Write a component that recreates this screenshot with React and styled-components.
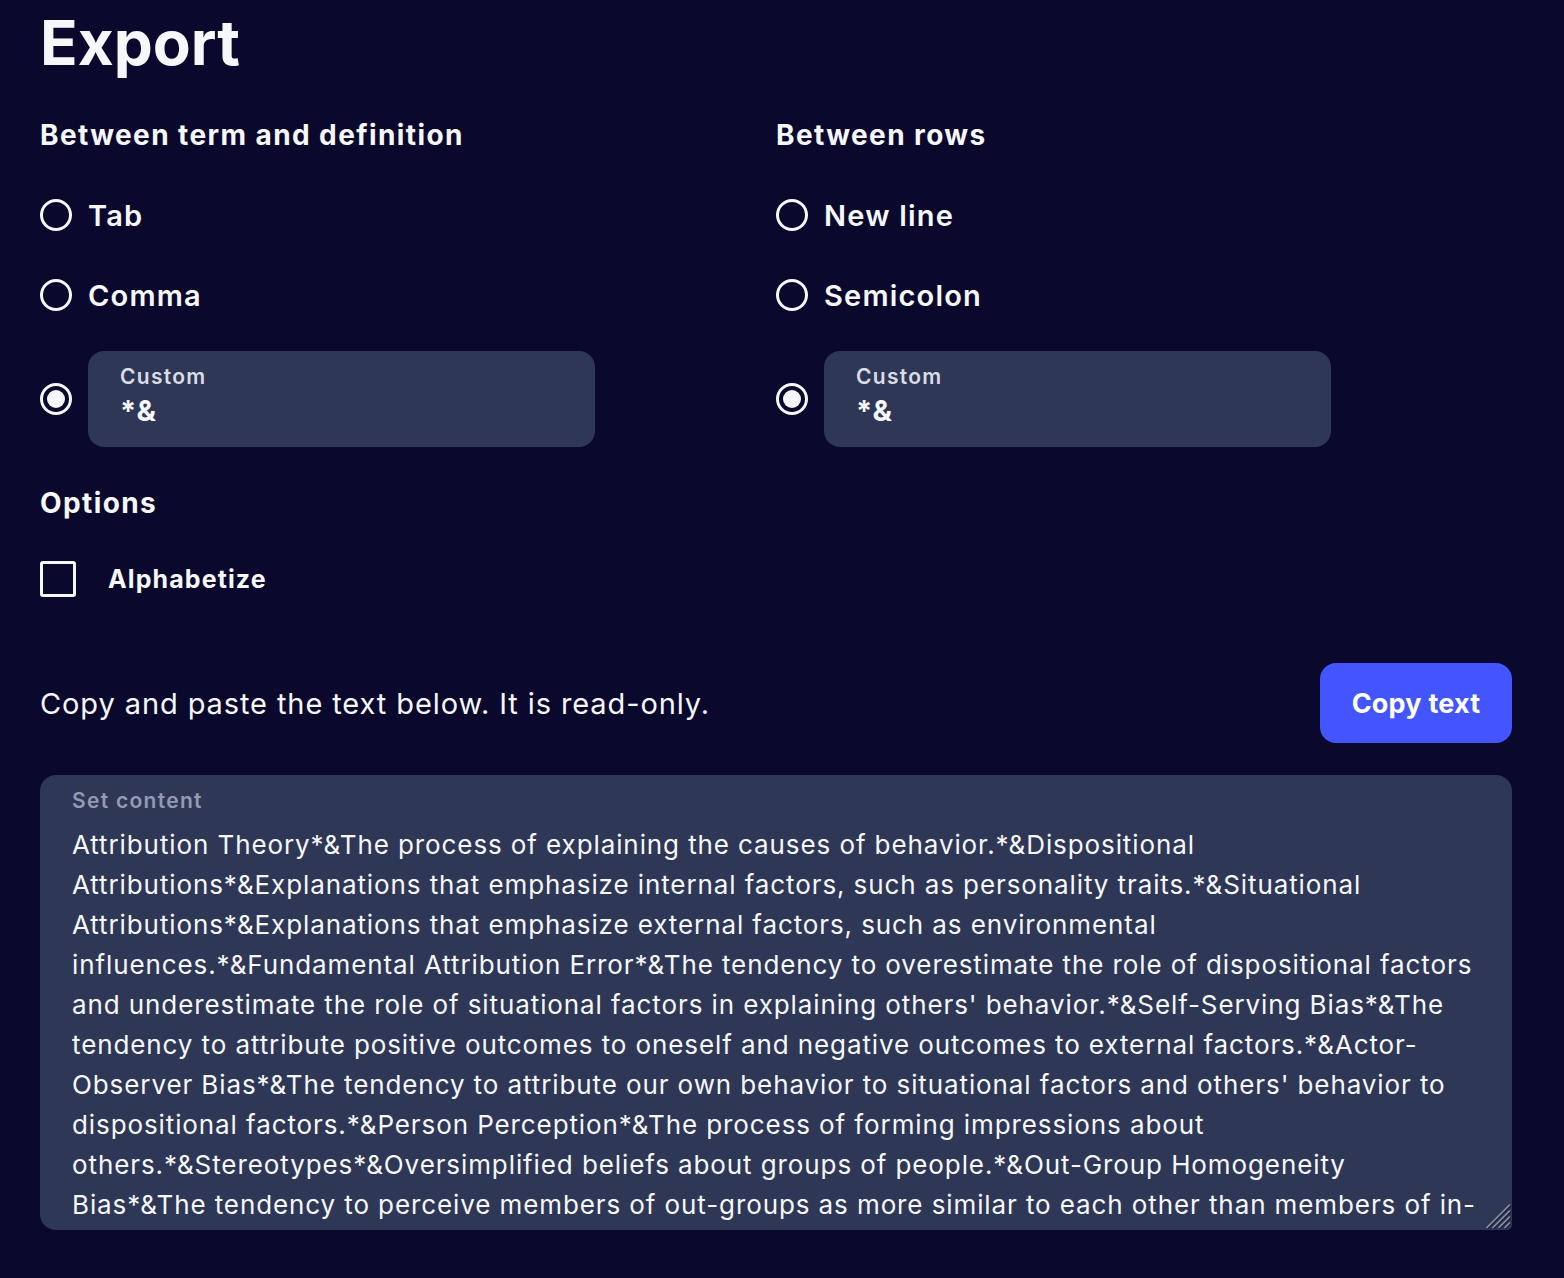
import React from "react";
import styled, { createGlobalStyle } from "styled-components";

const GlobalStyle = createGlobalStyle`
  body {
    margin: 0;
    background: #0a092d;
    color: #f6f7fb;
    font-family: Inter, "Open Sans", sans-serif;
  }
`;

const Page = styled.div`
  padding: 0 52px 40px 40px;
`;

const Title = styled.h1`
  font-size: 62px;
  font-weight: 700;
  line-height: 1;
  margin: 0;
  padding-top: 12px;
  letter-spacing: 0;
`;

const Columns = styled.div`
  display: grid;
  grid-template-columns: 1fr 1fr;
  margin-top: 43px;
`;

const Heading = styled.h2`
  font-size: 28px;
  font-weight: 700;
  line-height: 36px;
  margin: 0;
  letter-spacing: 1.4px;
`;

const OptionList = styled.div`
  display: flex;
  flex-direction: column;
  margin-top: 22px;
`;

const RadioRow = styled.label`
  display: flex;
  align-items: center;
  gap: 16px;
  min-height: ${props => (props.$tall ? "96px" : "80px")};
  margin-top: ${props => (props.$tall ? "16px" : "0")};
  font-size: 29px;
  font-weight: 600;
  letter-spacing: 1.2px;
`;

const Radio = styled.span`
  box-sizing: border-box;
  width: 32px;
  height: 32px;
  flex: none;
  border-radius: 50%;
  border: 3px solid #f6f7fb;
  display: flex;
  align-items: center;
  justify-content: center;

  &::after {
    content: "";
    width: 18px;
    height: 18px;
    border-radius: 50%;
    background: #f6f7fb;
    display: ${props => (props.$checked ? "block" : "none")};
  }
`;

const CustomBox = styled.div`
  box-sizing: border-box;
  width: 507px;
  height: 96px;
  background: #2e3856;
  border-radius: 16px;
  padding: 12px 32px;
  display: flex;
  flex-direction: column;
`;

const SmallLabel = styled.span`
  font-size: 21px;
  font-weight: 600;
  line-height: 28px;
  letter-spacing: 1.3px;
  color: ${props => (props.$muted ? "#939bb4" : "#d9dde8")};
`;

const CustomValue = styled.span`
  font-size: 29px;
  font-weight: 700;
  line-height: 40px;
`;

const OptionsSection = styled.section`
  margin-top: 38px;
`;

const CheckRow = styled.label`
  display: flex;
  align-items: center;
  gap: 32px;
  margin-top: 40px;
  font-size: 25px;
  font-weight: 700;
  letter-spacing: 1.1px;
`;

const Checkbox = styled.span`
  box-sizing: border-box;
  width: 36px;
  height: 36px;
  border: 3px solid #f6f7fb;
  border-radius: 3px;
`;

const CopyBar = styled.div`
  display: flex;
  align-items: center;
  justify-content: space-between;
  margin-top: 66px;
`;

const Hint = styled.p`
  margin: 0;
  font-size: 29px;
  font-weight: 400;
  letter-spacing: 0.9px;
`;

const CopyButton = styled.button`
  width: 192px;
  height: 80px;
  border: none;
  border-radius: 16px;
  background: #4255ff;
  color: #fff;
  font-family: inherit;
  font-size: 27px;
  font-weight: 700;
  letter-spacing: 0.2px;
  cursor: pointer;
`;

const OutputBox = styled.div`
  position: relative;
  margin-top: 32px;
  background: #2e3856;
  border-radius: 16px 16px 5px 16px;
  padding-top: 12px;
  display: flex;
  flex-direction: column;
  overflow: hidden;

  & > span {
    padding: 0 32px;
  }
`;

const Output = styled.textarea`
  box-sizing: border-box;
  width: 100%;
  height: 405px;
  margin-top: 10px;
  padding: 0 32px;
  border: none;
  outline: none;
  background: transparent;
  color: #f6f7fb;
  font-family: inherit;
  font-size: 26px;
  line-height: 40px;
  letter-spacing: 0.9px;
  white-space: pre;
  overflow: hidden;
  resize: none;
`;

const Grip = styled.svg`
  position: absolute;
  right: 1px;
  bottom: 1px;
  width: 26px;
  height: 26px;
  pointer-events: none;
`;

const lines = [
  "Attribution Theory*&The process of explaining the causes of behavior.*&Dispositional",
  "Attributions*&Explanations that emphasize internal factors, such as personality traits.*&Situational",
  "Attributions*&Explanations that emphasize external factors, such as environmental",
  "influences.*&Fundamental Attribution Error*&The tendency to overestimate the role of dispositional factors",
  "and underestimate the role of situational factors in explaining others' behavior.*&Self-Serving Bias*&The",
  "tendency to attribute positive outcomes to oneself and negative outcomes to external factors.*&Actor-",
  "Observer Bias*&The tendency to attribute our own behavior to situational factors and others' behavior to",
  "dispositional factors.*&Person Perception*&The process of forming impressions about",
  "others.*&Stereotypes*&Oversimplified beliefs about groups of people.*&Out-Group Homogeneity",
  "Bias*&The tendency to perceive members of out-groups as more similar to each other than members of in-",
  "groups.*&In-Group Bias*&The tendency to favor one's own group."
];

function SeparatorGroup({ title, first, second }) {
  return (
    <div>
      <Heading>{title}</Heading>
      <OptionList>
        <RadioRow>
          <Radio />
          {first}
        </RadioRow>
        <RadioRow>
          <Radio />
          {second}
        </RadioRow>
        <RadioRow $tall>
          <Radio $checked />
          <CustomBox>
            <SmallLabel>Custom</SmallLabel>
            <CustomValue>*&amp;</CustomValue>
          </CustomBox>
        </RadioRow>
      </OptionList>
    </div>
  );
}

export default function App() {
  return (
    <Page>
      <GlobalStyle />
      <Title>Export</Title>
      <Columns>
        <SeparatorGroup title="Between term and definition" first="Tab" second="Comma" />
        <SeparatorGroup title="Between rows" first="New line" second="Semicolon" />
      </Columns>
      <OptionsSection>
        <Heading>Options</Heading>
        <CheckRow>
          <Checkbox />
          Alphabetize
        </CheckRow>
      </OptionsSection>
      <CopyBar>
        <Hint>Copy and paste the text below. It is read-only.</Hint>
        <CopyButton>Copy text</CopyButton>
      </CopyBar>
      <OutputBox>
        <SmallLabel $muted>Set content</SmallLabel>
        <Output readOnly value={lines.join("\n")} />
        <Grip viewBox="0 0 26 26">
          <g strokeWidth="1.6" strokeLinecap="round">
            <path d="M3 25.5 L25.5 3" stroke="#1c2135" />
            <path d="M2 24.5 L24.5 2" stroke="#8d93a8" />
            <path d="M9 25.5 L25.5 9" stroke="#1c2135" />
            <path d="M8 24.5 L24.5 8" stroke="#8d93a8" />
            <path d="M15 25.5 L25.5 15" stroke="#1c2135" />
            <path d="M14 24.5 L24.5 14" stroke="#8d93a8" />
            <path d="M21 25.5 L25.5 21" stroke="#1c2135" />
            <path d="M20 24.5 L24.5 20" stroke="#8d93a8" />
          </g>
        </Grip>
      </OutputBox>
    </Page>
  );
}
